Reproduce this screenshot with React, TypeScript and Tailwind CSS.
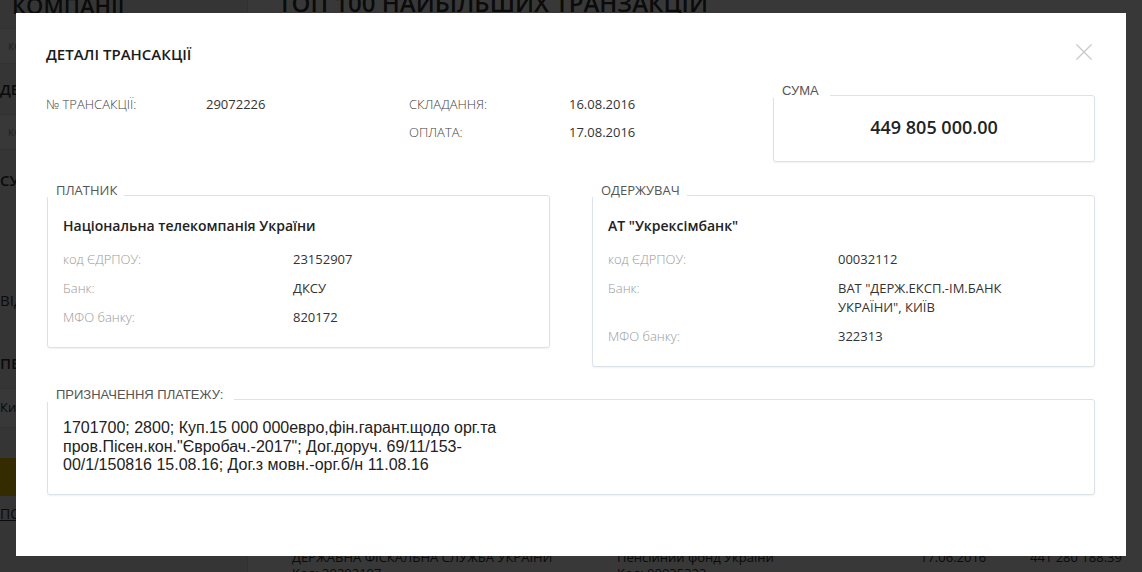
import React from 'react';

const openSans = { fontFamily: '"Open Sans", "Noto Sans", sans-serif' };
const arial = { fontFamily: '"Liberation Sans", Arial, sans-serif' };

// Page underneath the modal (dimmed by the overlay)
const BackgroundPage = () => (
  <div className="flex h-[572px] w-full bg-white text-[#333]" style={openSans}>
    <aside className="w-[248px] shrink-0 bg-[#f2f2f2] border-r border-[#ddd] flex flex-col">
      <div className="h-[14px] shrink-0 px-3 text-[22px] leading-[10px] font-semibold">КОМПАНІЇ</div>
      <div className="h-[36px] shrink-0 mt-[14px] border-y border-[#ddd] bg-white px-2 flex items-center text-[12px] text-[#999]">компанія</div>
      <div className="h-[50px] shrink-0 flex items-center text-[15px] font-semibold">ДЕРЖАВНІ</div>
      <div className="h-[36px] shrink-0 border-y border-[#ddd] bg-white px-2 flex items-center text-[12px] text-[#999]">компанія</div>
      <div className="h-[60px] shrink-0 flex items-center text-[15px] font-semibold">СУМА ПЛАТЕЖУ</div>
      <div className="h-[70px] shrink-0" />
      <div className="h-[40px] shrink-0 flex items-center text-[15px]">ВІД</div>
      <div className="h-[18px] shrink-0" />
      <div className="h-[50px] shrink-0 flex items-center text-[15px] font-semibold">ПЕРІОД</div>
      <div className="h-[40px] shrink-0 border-y border-[#ddd] bg-white flex items-center text-[13px]">Київ</div>
      <div className="h-[30px] shrink-0" />
      <div className="h-[38px] shrink-0 bg-[#f2c400]" />
      <div className="h-[34px] shrink-0 flex items-center text-[14px] underline">ПОШУК</div>
    </aside>
    <main className="flex-1 flex flex-col">
      <div className="h-[16px] shrink-0 pl-[30px] text-[24px] leading-[6px] font-semibold">ТОП 100 НАЙБІЛЬШИХ ТРАНЗАКЦІЙ</div>
      <div className="h-[533px] shrink-0" />
      <div className="shrink-0 grid grid-cols-[325px_303px_110px_1fr] pl-[44px] text-[13px] leading-[16px]">
        <div>ДЕРЖАВНА ФІСКАЛЬНА СЛУЖБА УКРАЇНИ<br />Код: 39292197</div>
        <div>Пенсійний фонд України<br />Код: 00035323</div>
        <div>17.06.2016</div>
        <div>441 280 188.39</div>
      </div>
    </main>
  </div>
);

const Legend = ({ children, className = '' }: { children: React.ReactNode; className?: string }) => (
  <div className={`absolute left-[-1px] bg-white pl-[9px] pr-[5px] text-[#555] ${className}`}>{children}</div>
);

const boxClass = 'relative border border-[#dde2e8] rounded-[3px] shadow-[0_1px_2px_rgba(0,0,0,0.06)] bg-white';

type Row = { label: string; value: React.ReactNode };

const PartyBox = ({ title, name, rows }: { title: string; name: string; rows: Row[] }) => (
  <div className={`${boxClass} w-[503px] pt-[20px] pb-[20px] px-[15px]`}>
    <Legend className="top-[-13px] text-[13px] leading-[14px] pr-[7px]">
      <span style={openSans}>{title}</span>
    </Legend>
    <div className="text-[14px] leading-[20px] font-semibold text-[#222]">{name}</div>
    <div className="mt-[14px] flex flex-col gap-[10px] text-[13px] leading-[19px]">
      {rows.map((r) => (
        <div key={r.label} className="grid grid-cols-[230px_1fr]">
          <div className="text-[#999] font-light">{r.label}</div>
          <div className="text-[#333]">{r.value}</div>
        </div>
      ))}
    </div>
  </div>
);

const CloseIcon = () => (
  <svg width="16" height="16" viewBox="0 0 16 16" fill="none" stroke="#c9c9c9" strokeWidth="1.4">
    <path d="M0.5 0.5 L15.5 15.5 M15.5 0.5 L0.5 15.5" />
  </svg>
);

const TransactionModal = () => (
  <div className="relative w-[1110px] h-[543px] bg-white pt-[31px] px-[31px]" style={openSans}>
    <button className="absolute top-[31px] right-[34px]" aria-label="close">
      <CloseIcon />
    </button>
    <h2 className="ml-[-1px] text-[15px] leading-[20px] font-semibold text-[#1a1a1a]">ДЕТАЛІ ТРАНСАКЦІЇ</h2>

    <div className="mt-[20px] flex items-start">
      <div className="w-[363px] pt-[6px] text-[13px] leading-[28px] ml-[-1px]">
        <div className="grid grid-cols-[160px_1fr]">
          <div className="text-[#444] font-light">№ ТРАНСАКЦІЇ:</div>
          <div className="text-[#333]">29072226</div>
        </div>
      </div>
      <div className="w-[364px] pt-[6px] text-[13px] leading-[28px]">
        <div className="grid grid-cols-[160px_1fr]">
          <div className="text-[#444] font-light">СКЛАДАННЯ:</div>
          <div className="text-[#333]">16.08.2016</div>
          <div className="text-[#444] font-light">ОПЛАТА:</div>
          <div className="text-[#333]">17.08.2016</div>
        </div>
      </div>
      <div className={`${boxClass} mt-[11px] w-[322px] h-[67px] flex items-center justify-center`}>
        <Legend className="top-[-13px] text-[13px] leading-[14px] w-[57px]">
          <span style={arial}>СУМА</span>
        </Legend>
        <div className="text-[18px] font-semibold text-[#222] pb-[2px]">449 805 000.00</div>
      </div>
    </div>

    <div className="mt-[33px] flex items-start justify-between">
      <PartyBox
        title="ПЛАТНИК"
        name="Національна телекомпанія України"
        rows={[
          { label: 'код ЄДРПОУ:', value: '23152907' },
          { label: 'Банк:', value: 'ДКСУ' },
          { label: 'МФО банку:', value: '820172' },
        ]}
      />
      <PartyBox
        title="ОДЕРЖУВАЧ"
        name={'АТ "Укрексімбанк"'}
        rows={[
          { label: 'код ЄДРПОУ:', value: '00032112' },
          {
            label: 'Банк:',
            value: (
              <>
                ВАТ "ДЕРЖ.ЕКСП.-ІМ.БАНК
                <br />
                УКРАЇНИ", КИЇВ
              </>
            ),
          },
          { label: 'МФО банку:', value: '322313' },
        ]}
      />
    </div>

    <div className={`${boxClass} mt-[32px] h-[96px] pt-[19px] px-[15px]`}>
      <Legend className="top-[-13px] text-[13px] leading-[14px] text-[#555] pr-[11px]">
        <span style={arial}>ПРИЗНАЧЕННЯ ПЛАТЕЖУ:</span>
      </Legend>
      <p className="text-[16px] leading-[18.5px] text-[#222]" style={arial}>
        1701700; 2800; Куп.15 000 000евро,фін.гарант.щодо орг.та
        <br />
        пров.Пісен.кон."Євробач.-2017"; Дог.доруч. 69/11/153-
        <br />
        00/1/150816 15.08.16; Дог.з мовн.-орг.б/н 11.08.16
      </p>
    </div>
  </div>
);

export default function App() {
  return (
    <div className="relative w-full h-[572px] overflow-hidden">
      <BackgroundPage />
      <div className="absolute inset-0 bg-black/[0.78] flex justify-center pt-[13px]">
        <TransactionModal />
      </div>
    </div>
  );
}
